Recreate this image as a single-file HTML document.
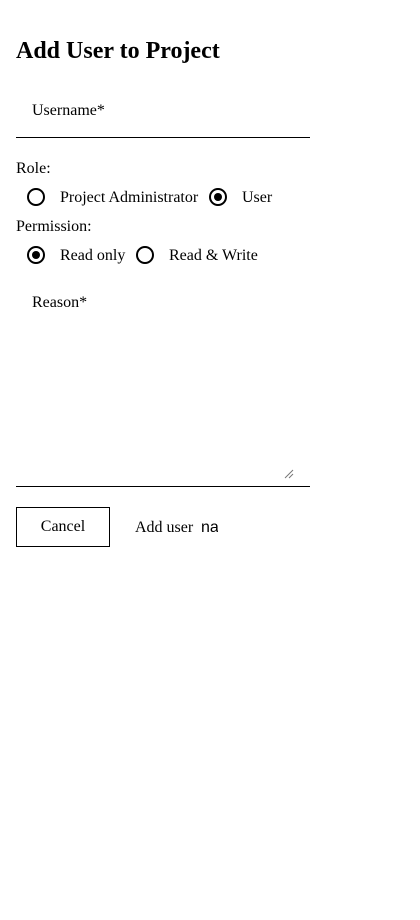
<!DOCTYPE html>
<html><head><meta charset="utf-8"><style>
html,body{margin:0;padding:0;background:#fff;width:420px;height:920px;overflow:hidden}
body{position:relative;font-family:"Liberation Serif",serif;font-size:16px;color:#000}
.a{position:absolute;white-space:nowrap;line-height:1}
h2{position:absolute;left:16px;top:39px;margin:0;font-size:24px;font-weight:bold;line-height:1}
.line{position:absolute;left:16px;width:294px;height:1px;background:#000}
.r{position:absolute;width:14px;height:14px;border:2px solid #000;border-radius:50%;box-sizing:content-box}
.r.on::after{content:"";position:absolute;left:3px;top:3px;width:8px;height:8px;border-radius:50%;background:#000}
.btn{position:absolute;left:16px;top:507px;width:92px;height:38px;border:1px solid #000;text-align:center;line-height:38px}
</style></head><body>
<h2>Add User to Project</h2>
<div class="a" style="left:32px;top:103px">Username*</div>
<div class="line" style="top:137px"></div>
<div class="a" style="left:16px;top:161px">Role:</div>
<div class="r" style="left:27px;top:188px"></div>
<div class="a" style="left:60px;top:190px">Project Administrator</div>
<div class="r on" style="left:209px;top:188px"></div>
<div class="a" style="left:242px;top:190px">User</div>
<div class="a" style="left:16px;top:219px">Permission:</div>
<div class="r on" style="left:27px;top:246px"></div>
<div class="a" style="left:60px;top:248px">Read only</div>
<div class="r" style="left:136px;top:246px"></div>
<div class="a" style="left:169px;top:248px">Read &amp; Write</div>
<div class="a" style="left:32px;top:295px">Reason*</div>
<svg style="position:absolute;left:284px;top:469px" width="10" height="10"><path d="M9 1L1 9M9 5L5 9" stroke="#777" stroke-width="1"/></svg>
<div class="line" style="top:486px"></div>
<div class="btn">Cancel</div>
<div class="a" style="left:135px;top:520px">Add user</div>
<div class="a" style="left:201px;top:519px;width:17px;overflow:hidden;font-family:'Liberation Sans',sans-serif;font-size:16px;line-height:1.1">name</div>
</body></html>
